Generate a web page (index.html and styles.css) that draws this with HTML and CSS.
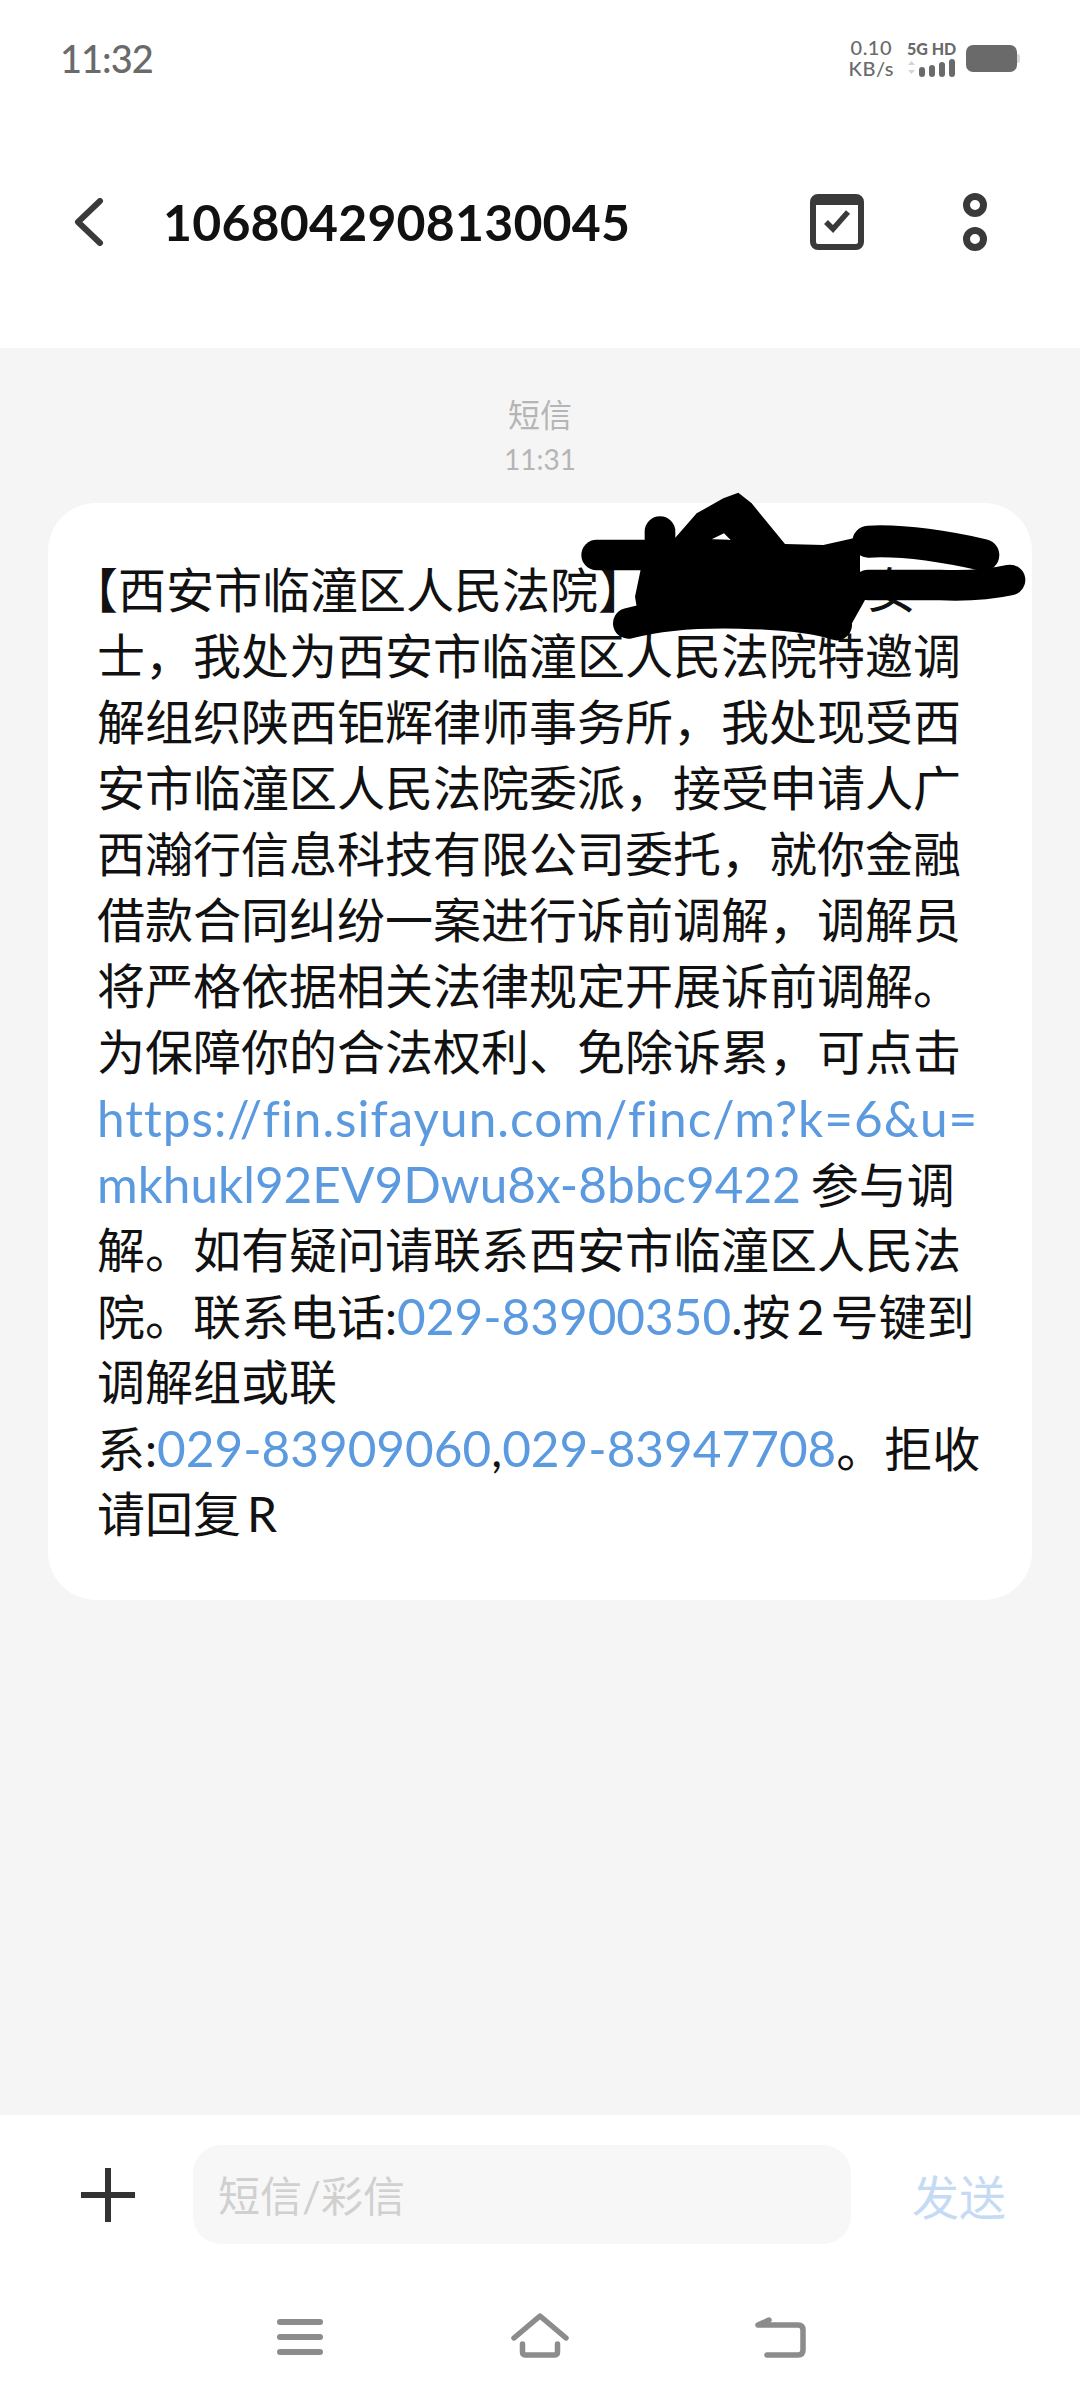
FILE: index.html
```html
<!DOCTYPE html>
<html lang="zh">
<head>
    <meta charset="UTF-8">
    <meta name="viewport" content="width=device-width, initial-scale=1.0">
    <title>短信</title>
    <link rel="stylesheet" href="styles.css">
</head>
<body>

<div class="page">

    <!-- Status bar -->
    <div class="status-bar">
        <div class="status-time">11:32</div>
        <div class="status-right">
            <div class="net-speed">
                <div>0.10</div>
                <div>KB/s</div>
            </div>
            <div class="net-type">
                <div class="net-label">5G HD</div>
                <svg class="signal" viewBox="0 0 50 18">
                    <path d="M1 6 L4.5 2 L8 6Z M1 11 L4.5 15 L8 11Z" fill="#d4d4d4"/>
                    <rect x="12" y="8" width="6" height="10" rx="3" fill="#6a6a6a"/>
                    <rect x="22" y="6" width="6" height="12" rx="3" fill="#6a6a6a"/>
                    <rect x="32" y="3" width="6" height="15" rx="3" fill="#6a6a6a"/>
                    <rect x="42" y="0" width="6" height="18" rx="3" fill="#6a6a6a"/>
                </svg>
            </div>
            <div class="battery"></div>
        </div>
    </div>

    <!-- Header -->
    <div class="header">
        <svg class="icon-back" viewBox="0 0 32 48">
            <path d="M27 3 L5 24 L27 45" fill="none" stroke="#3a3a3a" stroke-width="6" stroke-linecap="round" stroke-linejoin="round"/>
        </svg>
        <div class="header-title">1068042908130045</div>
        <svg class="icon-check" viewBox="0 0 54 56">
            <rect x="3" y="3" width="48" height="50" rx="5" fill="none" stroke="#3a3a3a" stroke-width="6"/>
            <path d="M3 8 H51" stroke="#3a3a3a" stroke-width="6"/>
            <path d="M16 28 L23 35 L38 18" fill="none" stroke="#3a3a3a" stroke-width="5.5"/>
        </svg>
        <svg class="icon-more" viewBox="0 0 24 58">
            <circle cx="12" cy="12" r="8.5" fill="none" stroke="#3a3a3a" stroke-width="7"/>
            <circle cx="12" cy="46" r="8.5" fill="none" stroke="#3a3a3a" stroke-width="7"/>
        </svg>
    </div>

    <!-- Message list -->
    <div class="messages">
        <div class="msg-meta">短信</div>
        <div class="msg-meta msg-time">11:31</div>

        <div class="bubble">
            <div class="line line-first">【西安市临潼区人民法院】尊<span class="hidden-gap"></span>/女</div>
            <div class="line">士，我处为西安市临潼区人民法院特邀调</div>
            <div class="line">解组织陕西钜辉律师事务所，我处现受西</div>
            <div class="line">安市临潼区人民法院委派，接受申请人广</div>
            <div class="line">西瀚行信息科技有限公司委托，就你金融</div>
            <div class="line">借款合同纠纷一案进行诉前调解，调解员</div>
            <div class="line">将严格依据相关法律规定开展诉前调解。</div>
            <div class="line">为保障你的合法权利、免除诉累，可点击</div>
            <div class="line"><span class="link link-url">https://fin.sifayun.com/finc/m?k=6&amp;u=</span></div>
            <div class="line"><span class="link link-tail">mkhukl92EV9Dwu8x-8bbc9422</span>参与调</div>
            <div class="line">解。如有疑问请联系西安市临潼区人民法</div>
            <div class="line">院。联系电话:<span class="link">029-83900350</span>.按<span class="sp">2</span>号键到</div>
            <div class="line">调解组或联</div>
            <div class="line">系:<span class="link">029-83909060</span>,<span class="link">029-83947708</span>。拒收</div>
            <div class="line">请回复<span class="sp">R</span></div>

            <!-- scribble over the name -->
            <svg class="scribble" viewBox="0 0 1560 600">
                <g fill="none" stroke="#000" stroke-linecap="round" stroke-linejoin="round">
                    <path d="M170 255 H560" stroke-width="92"/>
                    <path d="M360 185 V260" stroke-width="92"/>
                    <path d="M985 215 Q1120 208 1330 255" stroke-width="96"/>
                    <path d="M985 345 H1200 Q1320 350 1410 330" stroke-width="92"/>
                    <path d="M265 460 Q400 425 600 430 T890 465" stroke-width="92"/>
                </g>
                <path fill-rule="evenodd" d="M400 210 L470 130 L550 85 L595 68 L635 100 L735 222 L850 225 L960 200 L960 300 L975 390 L930 470 L300 470 L285 380 L310 260Z M515 208 L552 190 L572 210Z"/>
            </svg>
        </div>
    </div>

    <!-- Composer -->
    <div class="composer">
        <svg class="icon-plus" viewBox="0 0 54 54">
            <path d="M27 0 V54 M0 27 H54" stroke="#333" stroke-width="6"/>
        </svg>
        <div class="composer-input">短信/彩信</div>
        <div class="composer-send">发送</div>
    </div>

    <!-- Navigation bar -->
    <div class="nav-bar">
        <svg class="nav-icon" viewBox="0 0 60 60">
            <path d="M10 17 H50 M10 32 H50 M10 47 H50" fill="none" stroke="#8c8c8c" stroke-width="6" stroke-linecap="round"/>
        </svg>
        <svg class="nav-icon" viewBox="0 0 60 60">
            <path d="M4 33 L30 11 L56 33 M12.500 39 V47 Q12.500 50 16 50 H44 Q47.500 50 47.500 47 V39" fill="none" stroke="#8c8c8c" stroke-width="5.500" stroke-linecap="round" stroke-linejoin="round"/>
        </svg>
        <svg class="nav-icon" viewBox="0 0 60 60">
            <path d="M19 15 L8 20 H48 Q53 20 53 25 V45 Q53 50 48 50 H17" fill="none" stroke="#8c8c8c" stroke-width="5.500" stroke-linecap="round" stroke-linejoin="round"/>
        </svg>
    </div>

</div>

</body>
</html>
```

FILE: styles.css
```css
* {
    box-sizing: border-box;
}
body {
    margin: 0;
    font-family: "Lato", "Noto Sans CJK SC", sans-serif;
    background-color: #ffffff;
    color: #111111;
}
.page {
    width: 1080px;
    height: 2400px;
    display: flex;
    flex-direction: column;
    overflow: hidden;
}

/* status bar */
.status-bar {
    height: 96px;
    padding: 20px 60px 0 60px;
    display: flex;
    align-items: center;
    justify-content: space-between;
    color: #6a6a6a;
}
.status-time {
    font-size: 38px;
    font-weight: 500;
    letter-spacing: -1px;
}
.status-right {
    display: flex;
    align-items: center;
}
.net-speed {
    font-size: 20px;
    line-height: 21px;
    font-weight: 500;
    text-align: center;
    letter-spacing: 0.5px;
}
.net-type {
    margin-left: 13px;
    width: 50px;
}
.net-label {
    font-size: 16px;
    line-height: 17px;
    font-weight: 900;
    white-space: nowrap;
}
.signal {
    display: block;
    width: 50px;
    height: 18px;
    margin-top: 2px;
}
.battery {
    position: relative;
    width: 51px;
    height: 27px;
    margin-left: 9px;
    margin-right: 3px;
    background-color: #6a6a6a;
    border-radius: 7px;
}
.battery::after {
    content: "";
    position: absolute;
    right: -3px;
    top: 9px;
    width: 3px;
    height: 9px;
    background-color: #d8d8d8;
    border-radius: 0 2px 2px 0;
}

/* header */
.header {
    height: 252px;
    padding: 0 93px 0 73px;
    display: flex;
    align-items: center;
}
.icon-back {
    width: 32px;
    height: 48px;
}
.header-title {
    margin-left: 58px;
    font-size: 50px;
    font-weight: 700;
    letter-spacing: 0.2px;
    color: #111111;
}
.icon-check {
    width: 54px;
    height: 56px;
    margin-left: auto;
}
.icon-more {
    width: 24px;
    height: 58px;
    margin-left: 99px;
}

/* messages */
.messages {
    flex: 1;
    padding: 45px 48px 0 48px;
    background-color: #f5f5f5;
}
.msg-meta {
    font-size: 32px;
    line-height: 44px;
    text-align: center;
    color: #b5b5b5;
}
.msg-time {
    font-size: 28px;
}
.bubble {
    position: relative;
    margin-top: 22px;
    padding: 54px 30px 53px 49px;
    background-color: #ffffff;
    border-radius: 48px;
}
.line {
    height: 66px;
    font-size: 48px;
    line-height: 66px;
    white-space: nowrap;
}
.line-first {
    margin-left: -27px;
}
.link {
    font-size: 49.5px;
    color: #5c9ae0;
}
.link-url {
    letter-spacing: 1px;
}
.link-tail {
    margin-right: 10px;
}
.sp {
    padding: 0 6px;
}
.hidden-gap {
    display: inline-block;
    width: 152px;
}
.scribble {
    position: absolute;
    left: 492px;
    top: -33px;
    width: 520px;
    height: 200px;
}

/* composer */
.composer {
    height: 160px;
    padding: 30px 74px 31px 81px;
    display: flex;
    align-items: center;
}
.icon-plus {
    width: 54px;
    height: 54px;
}
.composer-input {
    width: 658px;
    height: 99px;
    margin-left: 58px;
    padding-left: 25px;
    background-color: #f7f7f7;
    border-radius: 28px;
    font-size: 42px;
    line-height: 102px;
    color: #d0d0d0;
}
.composer-send {
    margin-left: auto;
    font-size: 47px;
    color: #c5dbf3;
}

/* navigation bar */
.nav-bar {
    height: 125px;
    padding-top: 30px;
    display: flex;
    justify-content: center;
    align-items: flex-start;
    gap: 180px;
}
.nav-icon {
    width: 60px;
    height: 60px;
}
```
